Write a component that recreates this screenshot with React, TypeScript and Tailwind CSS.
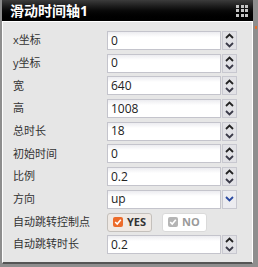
import React from "react"

const FONT = { fontFamily: '"Open Sans", "Noto Sans CJK SC", sans-serif' }

type Row = { label: string; value: string; kind: "num" | "select" | "toggle" }

const ROWS: Row[] = [
  { label: "x坐标", value: "0", kind: "num" },
  { label: "y坐标", value: "0", kind: "num" },
  { label: "宽", value: "640", kind: "num" },
  { label: "高", value: "1008", kind: "num" },
  { label: "总时长", value: "18", kind: "num" },
  { label: "初始时间", value: "0", kind: "num" },
  { label: "比例", value: "0.2", kind: "num" },
  { label: "方向", value: "up", kind: "select" },
  { label: "自动跳转控制点", value: "", kind: "toggle" },
  { label: "自动跳转时长", value: "0.2", kind: "num" },
]

function Chevron({ up, color }: { up?: boolean; color: string }) {
  return (
    <svg width="9" height="6" viewBox="0 0 9 6" className="block">
      <path d={up ? "M1 5 L4.5 1.5 L8 5" : "M1 1 L4.5 4.5 L8 1"} fill="none" stroke={color} strokeWidth="1.8" />
    </svg>
  )
}

function Input({ value }: { value: string }) {
  return (
    <div className="w-[114px] h-[19px] border border-[#c4c4cc] bg-gradient-to-b from-[#ececf0] to-white to-[30%] flex items-center px-[3px] text-[12px] text-[#222]">
      {value}
    </div>
  )
}

function Spinner() {
  return (
    <div className="w-[15px] h-[19px] border border-[#c8c8d0] bg-[#e2e2e6] flex flex-col">
      <div className="flex-1 flex items-center justify-center"><Chevron up color="#222" /></div>
      <div className="flex-1 flex items-center justify-center"><Chevron color="#3a3a48" /></div>
    </div>
  )
}

function Check({ color }: { color: string }) {
  return (
    <span className="w-[10px] h-[10px] rounded-[2px] flex items-center justify-center" style={{ background: color }}>
      <svg width="8" height="8" viewBox="0 0 8 8">
        <path d="M1.2 4 L3.2 6 L6.8 1.8" fill="none" stroke="white" strokeWidth="1.6" />
      </svg>
    </span>
  )
}

export default function App() {
  return (
    <div className="w-[258px] h-[267px] bg-[#8e8e8e] pl-[2px] pr-[5px] pb-[3px] relative" style={FONT}>
      <div className="absolute right-[1px] top-[26px] w-[2px] h-[3px] bg-[#e07030]" />
      <div className="h-[21px] bg-gradient-to-b from-[#3c3c3c] via-[#0a0a0a] to-black flex items-center justify-between pl-[8px] pr-[5px]">
        <span className="text-white font-bold text-[14px] leading-none">滑动时间轴1</span>
        <div className="grid grid-cols-3 gap-[1.5px]">
          {Array.from({ length: 9 }).map((_, i) => (
            <span key={i} className="w-[3px] h-[3px] bg-[#c4c4c4]" />
          ))}
        </div>
      </div>
      <div className="h-[243px] bg-[#e6e6e6] border-l border-t border-r border-white border-b-2 border-b-[#555] pt-[9px] flex flex-col gap-[3.7px]">
        {ROWS.map(r => (
          <div key={r.label} className="flex items-center h-[19px]">
            <span className="w-[104px] pl-[10px] text-[11px] text-[#333]">{r.label}</span>
            {r.kind === "num" && (
              <div className="flex items-center gap-[1px]">
                <Input value={r.value} />
                <Spinner />
              </div>
            )}
            {r.kind === "select" && (
              <div className="flex items-center gap-[1px]">
                <Input value={r.value} />
                <div className="w-[15px] h-[19px] border border-[#c8c8d0] bg-[#ececf0] flex items-center justify-center">
                  <Chevron color="#2b4aa0" />
                </div>
              </div>
            )}
            {r.kind === "toggle" && (
              <div className="flex items-center gap-[10px]">
                <div className="w-[45px] h-[19px] rounded-[3px] border border-[#c4c0bc] bg-[#efe9e4] flex items-center gap-[4px] pl-[5px] text-[11px] font-bold text-[#333]">
                  <Check color="#ec6b2a" />
                  YES
                </div>
                <div className="w-[45px] h-[19px] rounded-[3px] border border-[#dadada] bg-white flex items-center gap-[4px] pl-[5px] text-[11px] font-bold text-[#9a9a9a]">
                  <Check color="#b5b5b5" />
                  NO
                </div>
              </div>
            )}
          </div>
        ))}
      </div>
    </div>
  )
}
